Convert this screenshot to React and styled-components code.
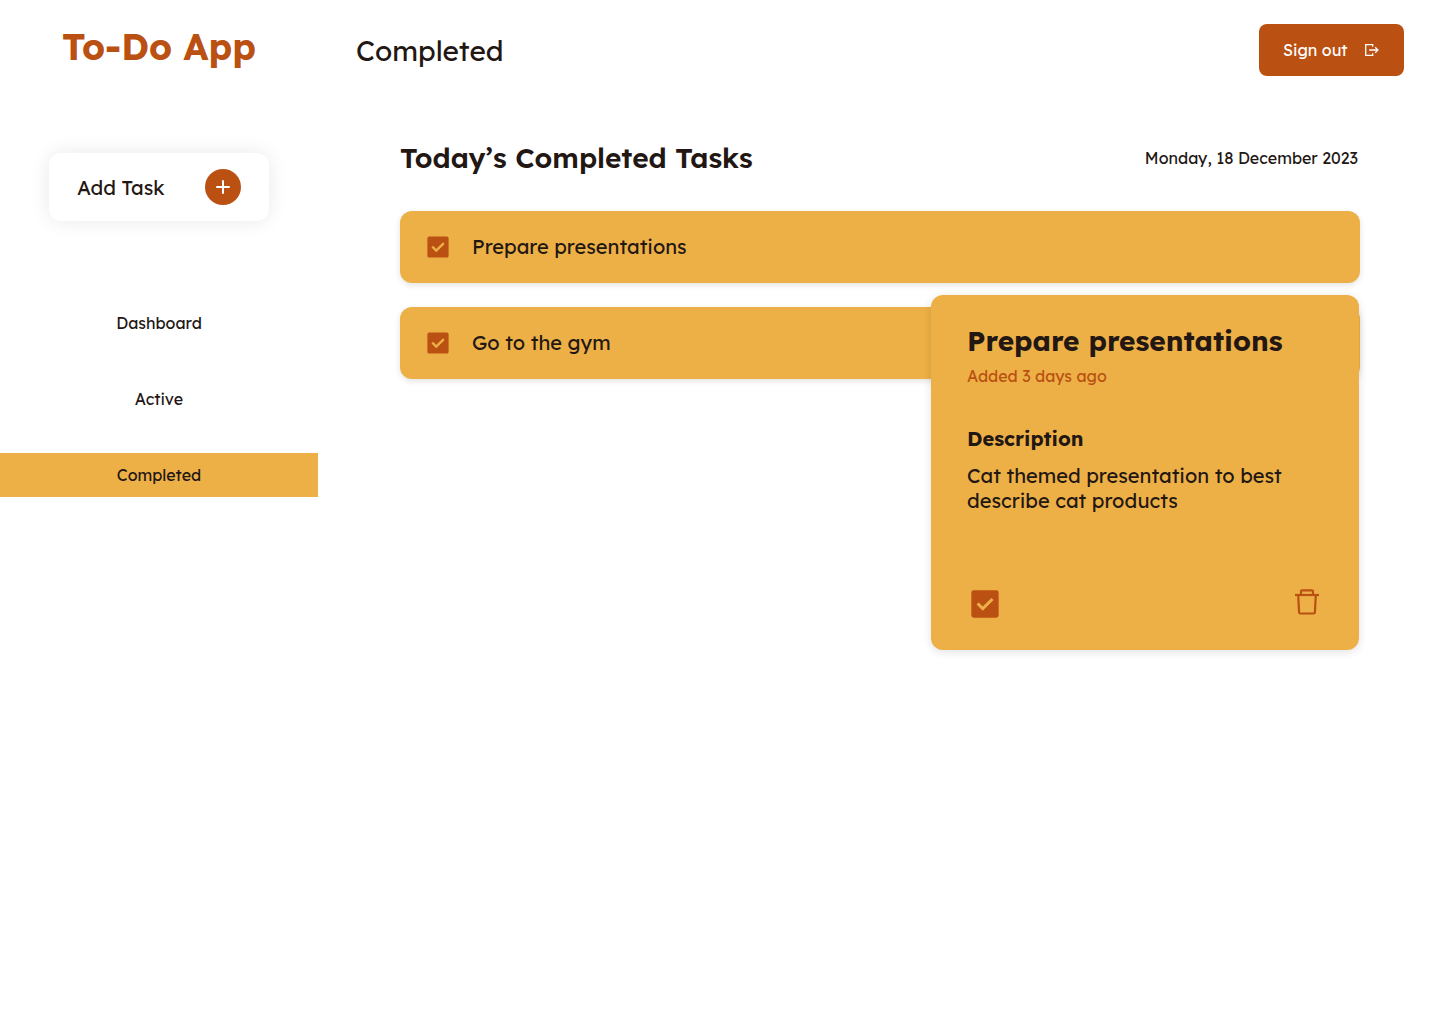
import React, { useState } from "react";
import styled, { createGlobalStyle } from "styled-components";

const color = {
  accent: "#ba5012",
  amber: "#edb046",
  ink: "#231714",
  white: "#ffffff",
};

const GlobalStyle = createGlobalStyle`
  *, *::before, *::after { box-sizing: border-box; }
  body {
    margin: 0;
    background: ${color.white};
    color: ${color.ink};
    font-family: Lexend, Inter, "Liberation Sans", sans-serif;
    font-size: 16px;
    line-height: 20px;
    -webkit-font-smoothing: antialiased;
  }
  h1, h2, h3, p, ul { margin: 0; padding: 0; }
  button { font: inherit; color: inherit; border: 0; cursor: pointer; }
`;

const Page = styled.div`
  display: grid;
  grid-template-columns: 318px minmax(0, 1fr);
  grid-template-rows: 100px auto;
  min-height: 100vh;
`;

const Brand = styled.p`
  padding-top: 24px;
  color: ${color.accent};
  font-size: 36px;
  font-weight: 700;
  line-height: 46px;
  text-align: center;
`;

const TopBar = styled.header`
  display: flex;
  align-items: center;
  justify-content: space-between;
  padding: 0 36px 0 38px;
`;

const PageTitle = styled.h1`
  font-size: 28px;
  font-weight: 400;
  line-height: 35px;
`;

const SignOutButton = styled.button`
  display: flex;
  align-items: center;
  justify-content: space-between;
  width: 145px;
  height: 52px;
  padding: 0 24px;
  border-radius: 8px;
  background: ${color.accent};
  color: ${color.white};
`;

const Sidebar = styled.aside`
  display: flex;
  flex-direction: column;
  align-items: center;
  gap: 80px;
  padding-top: 53px;
`;

const AddTaskButton = styled.button`
  display: flex;
  align-items: center;
  justify-content: space-between;
  width: 220px;
  height: 68px;
  padding: 0 28px;
  border-radius: 12px;
  background: ${color.white};
  box-shadow: 0 0 20px rgba(0, 0, 0, 0.09);
  font-size: 20px;
  line-height: 25px;
`;

const PlusBadge = styled.span`
  display: grid;
  place-items: center;
  width: 36px;
  height: 36px;
  border-radius: 50%;
  background: ${color.accent};
`;

const NavList = styled.nav`
  display: flex;
  flex-direction: column;
  gap: 32px;
  align-self: stretch;
`;

const NavLink = styled.a`
  display: grid;
  place-items: center;
  height: 44px;
  background: ${(p) => (p.$active ? color.amber : "transparent")};
  color: inherit;
  text-decoration: none;
`;

const Main = styled.main`
  padding: 40px 80px 40px 82px;
`;

const SectionHead = styled.div`
  display: flex;
  align-items: center;
  justify-content: space-between;
  margin-bottom: 36px;
  padding-right: 2px;
`;

const SectionTitle = styled.h2`
  font-size: 28px;
  font-weight: 600;
  line-height: 35px;
`;

const Board = styled.div`
  position: relative;
`;

const TaskList = styled.ul`
  display: flex;
  flex-direction: column;
  gap: 24px;
  list-style: none;
`;

const TaskRow = styled.li`
  display: flex;
  align-items: center;
  height: 72px;
  padding: 0 24px;
  border-radius: 12px;
  background: ${color.amber};
  box-shadow: 0 2px 6px rgba(0, 0, 0, 0.12);
`;

const TaskLabel = styled.label`
  display: flex;
  align-items: center;
  gap: 20px;
  font-size: 20px;
  line-height: 24px;
`;

const CheckWrap = styled.span`
  display: grid;
  width: ${(p) => p.$size}px;
  height: ${(p) => p.$size}px;

  > * {
    grid-area: 1 / 1;
    width: 100%;
    height: 100%;
  }
  svg { pointer-events: none; }
`;

const CheckInput = styled.input`
  appearance: none;
  margin: 0;
  cursor: pointer;
`;

const DetailCard = styled.article`
  position: absolute;
  top: 84px;
  right: 1px;
  display: flex;
  flex-direction: column;
  width: 428px;
  min-height: 355px;
  padding: 28px 36px;
  border-radius: 12px;
  background: ${color.amber};
  box-shadow: 0 2px 10px rgba(0, 0, 0, 0.12);
`;

const DetailTitle = styled.h2`
  font-size: 28px;
  font-weight: 700;
  line-height: 35px;
`;

const AddedNote = styled.p`
  margin: 8px 0 40px;
  color: ${color.accent};
`;

const DetailSubtitle = styled.h3`
  font-size: 20px;
  font-weight: 700;
  line-height: 25px;
`;

const DetailText = styled.p`
  margin-top: 12px;
  font-size: 20px;
  line-height: 25px;
`;

const DetailActions = styled.div`
  display: flex;
  align-items: flex-start;
  justify-content: space-between;
  margin-top: auto;
`;

const IconButton = styled.button`
  display: grid;
  place-items: center;
  width: 32px;
  height: 32px;
  padding: 0;
  background: none;
  color: ${color.accent};
`;

function Checkbox({ size, id, label, checked, onChange }) {
  return (
    <CheckWrap $size={size}>
      <CheckInput type="checkbox" id={id} aria-label={label} checked={checked} onChange={onChange} />
      <svg viewBox="0 0 24 24" fill="none" aria-hidden="true">
        {checked ? (
          <>
            <rect x="2.900" y="2.900" width="18.200" height="18.200" rx="1.600" fill={color.accent} />
            <path d="M7.100 11.700l3.400 3.400 6.500-6.400" stroke={color.amber} strokeWidth="2" />
          </>
        ) : (
          <rect x="4" y="4" width="16" height="16" rx="1" stroke={color.accent} strokeWidth="2" />
        )}
      </svg>
    </CheckWrap>
  );
}

const SignOutIcon = () => (
  <svg width="16" height="16" viewBox="0 0 16 16" fill="none" stroke="currentColor" strokeWidth="1.3" aria-hidden="true">
    <path d="M8.700 4.700V2.700H1.700v10.600h7v-2" />
    <path d="M5.200 8h8.200M11.200 5.300L13.900 8l-2.700 2.700" />
  </svg>
);

const PlusIcon = () => (
  <svg width="14" height="14" viewBox="0 0 14 14" stroke={color.white} strokeWidth="2" strokeLinecap="round" aria-hidden="true">
    <path d="M7 1v12M1 7h12" />
  </svg>
);

const TrashIcon = () => (
  <svg width="32" height="32" viewBox="0 0 32 32" fill="none" stroke="currentColor" strokeWidth="2.200" strokeLinejoin="round" aria-hidden="true">
    <path d="M4 9h24" />
    <path d="M10 9V5.600Q10 4.400 11.200 4.400h9.600Q22 4.400 22 5.600V9" />
    <path d="M7.200 9l.9 17.400q.1 1.100 1.200 1.100h13.400q1.100 0 1.200-1.100L24.800 9" />
  </svg>
);

const navItems = ["Dashboard", "Active", "Completed"];

export default function App() {
  const [tasks, setTasks] = useState([
    { id: "presentations", name: "Prepare presentations", done: true },
    { id: "gym", name: "Go to the gym", done: true },
  ]);
  const toggle = (id) =>
    setTasks((list) => list.map((t) => (t.id === id ? { ...t, done: !t.done } : t)));
  const selected = tasks[0];

  return (
    <>
      <GlobalStyle />
      <Page>
        <Brand>To-Do App</Brand>
        <TopBar>
          <PageTitle>Completed</PageTitle>
          <SignOutButton type="button">
            Sign out
            <SignOutIcon />
          </SignOutButton>
        </TopBar>
        <Sidebar>
          <AddTaskButton type="button">
            Add Task
            <PlusBadge>
              <PlusIcon />
            </PlusBadge>
          </AddTaskButton>
          <NavList>
            {navItems.map((item) => (
              <NavLink key={item} href={`#${item.toLowerCase()}`} $active={item === "Completed"}>
                {item}
              </NavLink>
            ))}
          </NavList>
        </Sidebar>
        <Main>
          <SectionHead>
            <SectionTitle>Today’s Completed Tasks</SectionTitle>
            <time dateTime="2023-12-18">Monday, 18 December 2023</time>
          </SectionHead>
          <Board>
            <TaskList>
              {tasks.map((task) => (
                <TaskRow key={task.id}>
                  <TaskLabel htmlFor={task.id}>
                    <Checkbox size={28} id={task.id} checked={task.done} onChange={() => toggle(task.id)} />
                    {task.name}
                  </TaskLabel>
                </TaskRow>
              ))}
            </TaskList>
            <DetailCard>
              <DetailTitle>{selected.name}</DetailTitle>
              <AddedNote>Added 3 days ago</AddedNote>
              <DetailSubtitle>Description</DetailSubtitle>
              <DetailText>Cat themed presentation to best describe cat products</DetailText>
              <DetailActions>
                <Checkbox
                  size={36}
                  id="selected-done"
                  label="Task completed"
                  checked={selected.done}
                  onChange={() => toggle(selected.id)}
                />
                <IconButton type="button" aria-label="Delete task">
                  <TrashIcon />
                </IconButton>
              </DetailActions>
            </DetailCard>
          </Board>
        </Main>
      </Page>
    </>
  );
}
